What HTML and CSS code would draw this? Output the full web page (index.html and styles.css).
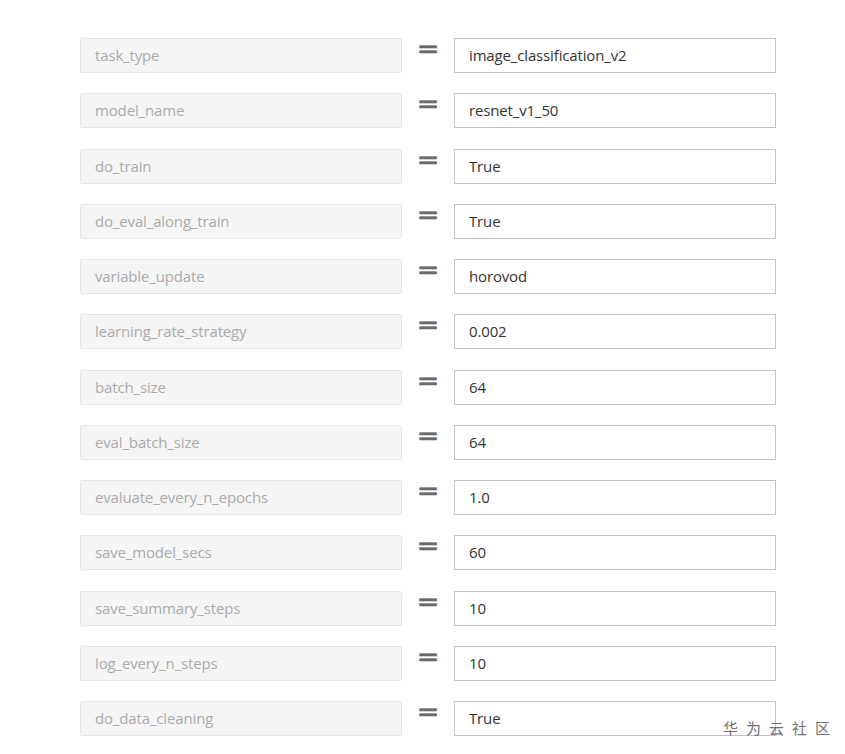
FILE: index.html
```html
<!DOCTYPE html>
<html>
<head>
<meta charset="utf-8">
<link rel="stylesheet" href="styles.css">
</head>
<body>
<div class="form">
  <div class="row"><div class="key">task_type</div><span class="eq">=</span><div class="val">image_classification_v2</div></div>
  <div class="row"><div class="key">model_name</div><span class="eq">=</span><div class="val">resnet_v1_50</div></div>
  <div class="row"><div class="key">do_train</div><span class="eq">=</span><div class="val">True</div></div>
  <div class="row"><div class="key">do_eval_along_train</div><span class="eq">=</span><div class="val">True</div></div>
  <div class="row"><div class="key">variable_update</div><span class="eq">=</span><div class="val">horovod</div></div>
  <div class="row"><div class="key">learning_rate_strategy</div><span class="eq">=</span><div class="val">0.002</div></div>
  <div class="row"><div class="key">batch_size</div><span class="eq">=</span><div class="val">64</div></div>
  <div class="row"><div class="key">eval_batch_size</div><span class="eq">=</span><div class="val">64</div></div>
  <div class="row"><div class="key">evaluate_every_n_epochs</div><span class="eq">=</span><div class="val">1.0</div></div>
  <div class="row"><div class="key">save_model_secs</div><span class="eq">=</span><div class="val">60</div></div>
  <div class="row"><div class="key">save_summary_steps</div><span class="eq">=</span><div class="val">10</div></div>
  <div class="row"><div class="key">log_every_n_steps</div><span class="eq">=</span><div class="val">10</div></div>
  <div class="row"><div class="key">do_data_cleaning</div><span class="eq">=</span><div class="val">True</div></div>
</div>
<div class="watermark">华为云社区</div>
</body>
</html>
```
FILE: styles.css
```css
html, body {
  margin: 0;
  padding: 0;
  background: #ffffff;
  height: 754px;
  overflow: hidden;
}
body {
  font-family: "Open Sans", "Liberation Sans", sans-serif;
  position: relative;
}
.form {
  display: flex;
  flex-direction: column;
  gap: 20.25px;
  padding: 38px 0 0 80px;
}
.row {
  display: flex;
  align-items: flex-start;
  height: 35px;
}
.key, .val {
  box-sizing: border-box;
  height: 35px;
  display: flex;
  align-items: center;
  padding-left: 14px;
  padding-bottom: 1px;
  font-size: 15px;
  letter-spacing: -0.15px;
}
.key {
  width: 322px;
  background: #f5f5f5;
  border: 1px solid #e6e6e6;
  color: #ababab;
  border-radius: 2px;
}
.eq {
  width: 52px;
  text-align: center;
  font-family: "DejaVu Sans", sans-serif;
  font-size: 27px;
  line-height: 26px;
  color: #6a6a6a;
  margin-top: -2px;
  -webkit-text-stroke: 0.6px #6a6a6a;
}
.val {
  width: 322px;
  border: 1px solid #c4c4c4;
  color: #333;
  background: #fff;
}
.watermark {
  position: absolute;
  left: 723px;
  top: 717px;
  font-family: "Noto Sans CJK SC", sans-serif;
  font-size: 15px;
  letter-spacing: 8px;
  color: #707070;
}
```
